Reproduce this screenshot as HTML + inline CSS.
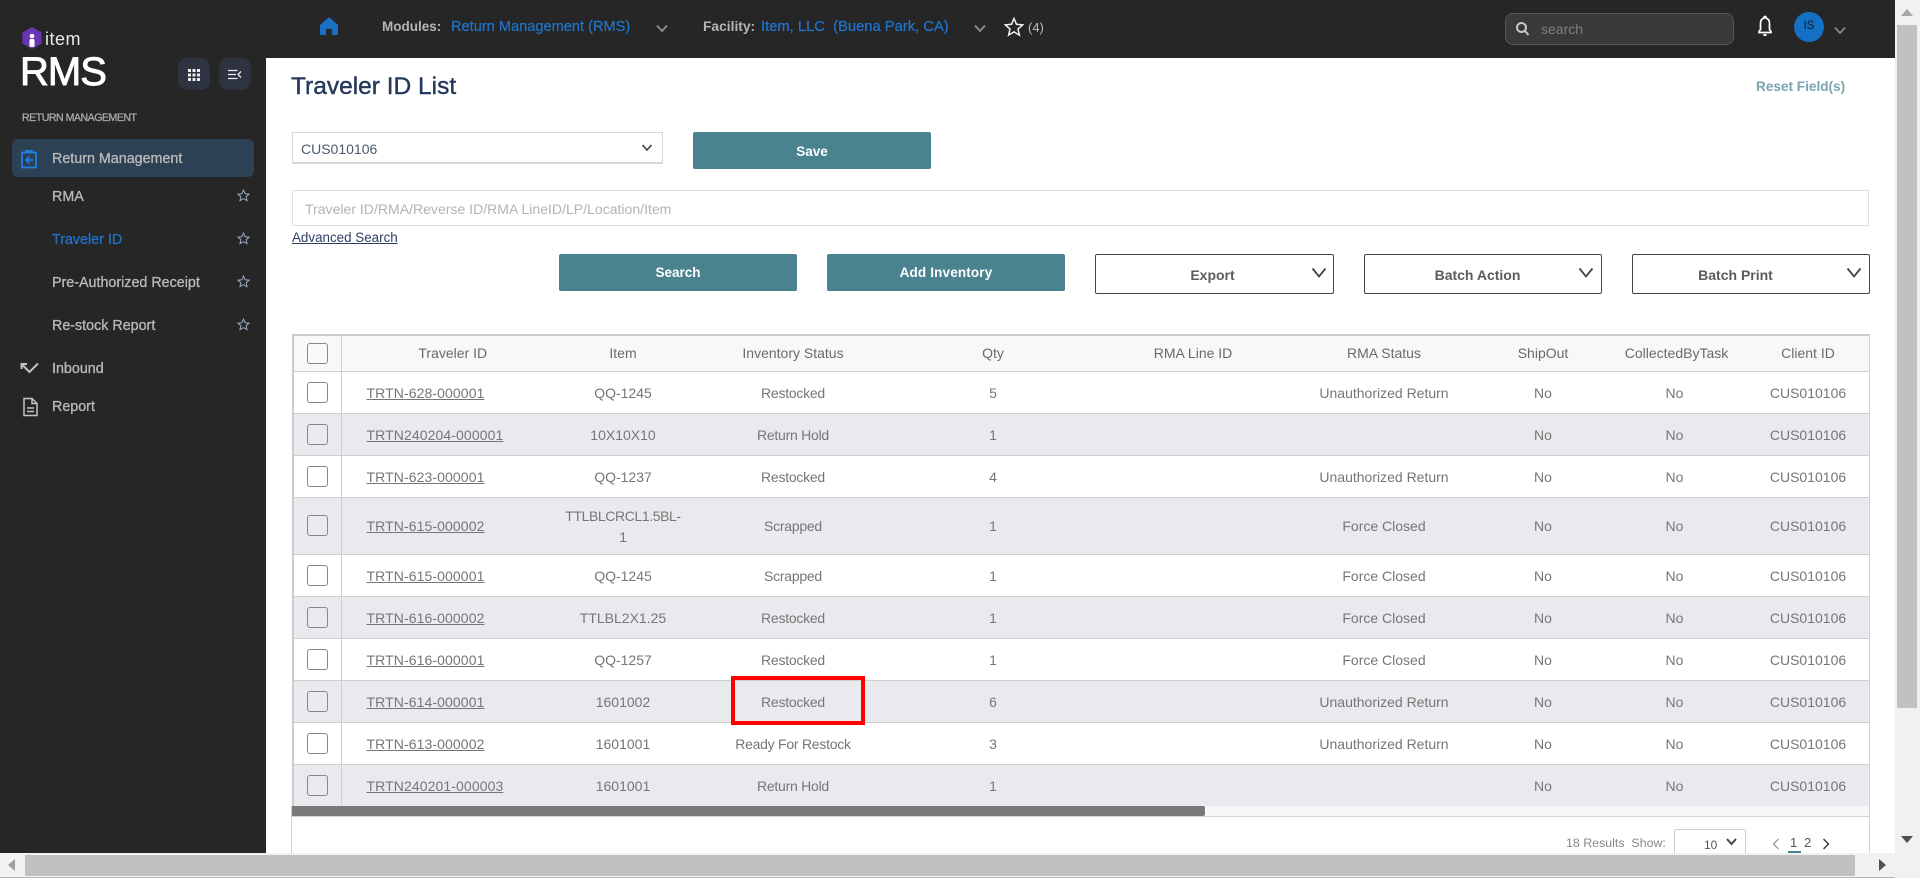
<!DOCTYPE html>
<html><head><meta charset="utf-8"><title>Traveler ID List</title>
<style>
*{box-sizing:border-box}
html,body{margin:0;padding:0;width:1920px;height:878px;overflow:hidden;background:#fff;font-family:"Liberation Sans",sans-serif}
.a{position:absolute;white-space:nowrap}
#side{position:absolute;left:0;top:0;width:266px;height:853px;background:#262626}
#top{position:absolute;left:266px;top:0;width:1630px;height:58px;background:#262626}
.nav{font-size:14.3px;color:#b9b9b9;line-height:20px;height:20px;-webkit-text-stroke:.3px}
.btn{background:#4a828f;color:#fff;font-size:13.5px;font-weight:bold;text-align:center;border-radius:2px}
.drop{border:1.5px solid #444;border-radius:2px;background:#fff;color:#5c5c5c;font-size:14px;font-weight:bold;height:40px;line-height:41px;text-align:center}
.tw{position:absolute;left:292px;top:334px;width:1577px;height:472px;overflow:hidden;border-top:2px solid #ccc;border-left:2px solid #ccc}
table{border-collapse:collapse;table-layout:fixed;width:1591px}
th,td{font-weight:normal;font-size:14px;color:#767676;text-align:center;padding:0;border-bottom:1px solid #cfcfcf;line-height:21px}
th{background:#f8f8f8;height:35px;color:#6a6a6a}
td{height:42px;padding-top:2px}
tr.g td{background:#e9eaee}
td:first-child,th:first-child{border-right:1px solid #cfcfcf;padding-top:0}
td.l{text-align:left;padding-left:25px;text-decoration:underline;letter-spacing:.1px}
td:nth-child(4){letter-spacing:-.25px}
td:nth-child(9){padding-right:4px}
.cb{display:block;width:21px;height:21px;border:1.5px solid #888;border-radius:3px;margin:0 0 0 13px;background:transparent}
.st{left:237px;width:13px;height:13px}
</style></head><body>

<div id="side"></div>
<div id="top"></div>

<!-- logo -->
<svg class="a" style="left:21px;top:26px" width="22" height="24" viewBox="0 0 22 24"><path d="M11 1l9.500 5.500v11L11 23 1.500 17.500v-11z" fill="#6a35b5"/><circle cx="11" cy="10" r="2.300" fill="#fff"/><rect x="8.500" y="13" width="5" height="8" rx="1" fill="#fff"/></svg>
<div class="a" style="left:45px;top:27px;font-size:18px;line-height:24px;letter-spacing:.5px;color:#e8e8e8">item</div>
<div class="a" style="left:20px;top:48px;font-size:40px;line-height:48px;letter-spacing:-1px;color:#fff;-webkit-text-stroke:.9px #fff">RMS</div>
<div class="a" style="left:178px;top:58px;width:32px;height:32px;background:#2e3342;border-radius:9px"></div>
<svg class="a" style="left:188px;top:69px" width="12" height="12" viewBox="0 0 12 12" fill="#eee"><rect x="0" y="0" width="3" height="3"/><rect x="4.500" y="0" width="3" height="3"/><rect x="9" y="0" width="3" height="3"/><rect x="0" y="4.500" width="3" height="3"/><rect x="4.500" y="4.500" width="3" height="3"/><rect x="9" y="4.500" width="3" height="3"/><rect x="0" y="9" width="3" height="3"/><rect x="4.500" y="9" width="3" height="3"/><rect x="9" y="9" width="3" height="3"/></svg>
<div class="a" style="left:219px;top:58px;width:32px;height:32px;background:#2e3342;border-radius:9px"></div>
<svg class="a" style="left:228px;top:69px" width="14" height="11" viewBox="0 0 14 11" fill="none" stroke="#eee" stroke-width="1.300"><path d="M0 1.500h9.500M0 5.500h8M0 9.500h9.500M13 2.500L10 5.500l3 3"/></svg>
<div class="a" style="left:22px;top:111px;font-size:10.6px;line-height:14px;color:#a8a8a8;letter-spacing:-.5px;-webkit-text-stroke:.3px">RETURN MANAGEMENT</div>

<!-- active -->
<div class="a" style="left:12px;top:139px;width:242px;height:38px;background:#2c4154;border-radius:6px"></div>
<svg class="a" style="left:20px;top:149px" width="18" height="20" viewBox="0 0 18 20" fill="none" stroke="#1e7fe8" stroke-width="1.700"><path d="M6 3.500H2v15h14v-15h-4M6 3.500V2h6v1.500z"/><path d="M13 11H6.500M9 8l-3 3 3 3" stroke-width="1.700"/></svg>
<div class="a nav" style="left:52px;top:149px">Return Management</div>
<div class="a nav" style="left:52px;top:187px">RMA</div>
<div class="a nav" style="left:52px;top:230px;color:#1f72c9">Traveler ID</div>
<div class="a nav" style="left:52px;top:273px">Pre-Authorized Receipt</div>
<div class="a nav" style="left:52px;top:316px">Re-stock Report</div>
<div class="a nav" style="left:52px;top:359px">Inbound</div>
<div class="a nav" style="left:52px;top:397px">Report</div>
<svg class="a st" style="top:189px" viewBox="0 0 15 15"><path d="M7.500 1.200l1.900 4.300 4.600.4-3.500 3 1.100 4.600-4.100-2.400-4.100 2.400 1.100-4.600-3.500-3 4.600-.4z" fill="none" stroke="#9fb0c4" stroke-width="1.100"/></svg>
<svg class="a st" style="top:232px" viewBox="0 0 15 15"><path d="M7.500 1.200l1.900 4.300 4.600.4-3.500 3 1.100 4.600-4.100-2.400-4.100 2.400 1.100-4.600-3.500-3 4.600-.4z" fill="none" stroke="#9fb0c4" stroke-width="1.100"/></svg>
<svg class="a st" style="top:275px" viewBox="0 0 15 15"><path d="M7.500 1.200l1.900 4.300 4.600.4-3.500 3 1.100 4.600-4.100-2.400-4.100 2.400 1.100-4.600-3.500-3 4.600-.4z" fill="none" stroke="#9fb0c4" stroke-width="1.100"/></svg>
<svg class="a st" style="top:318px" viewBox="0 0 15 15"><path d="M7.500 1.200l1.900 4.300 4.600.4-3.500 3 1.100 4.600-4.100-2.400-4.100 2.400 1.100-4.600-3.500-3 4.600-.4z" fill="none" stroke="#9fb0c4" stroke-width="1.100"/></svg>
<svg class="a" style="left:20px;top:361px" width="20" height="14" viewBox="0 0 20 14" fill="none" stroke="#c2c2c2" stroke-width="2"><path d="M1.500 8V3H7M2 3.500l7.500 7.500 8.500-8.500"/></svg>
<svg class="a" style="left:22px;top:397px" width="17" height="20" viewBox="0 0 17 20" fill="none" stroke="#c4c4c4" stroke-width="1.500"><path d="M2 1.500h8l5 5v12H2zM10 1.500v5h5M5 11h7M5 14.500h7"/></svg>

<!-- top bar -->
<svg class="a" style="left:320px;top:17px" width="18" height="18" viewBox="0 0 18 18"><path d="M9 0L0 8v10h6v-6h6v6h6V8z" fill="#1a6fc2"/></svg>
<div class="a" style="left:382px;top:17px;font-size:13.500px;line-height:20px;color:#b5b5b5;font-weight:bold">Modules:</div>
<div class="a" style="left:451px;top:17px;font-size:14.600px;line-height:20px;color:#1f72c9;-webkit-text-stroke:.25px">Return Management (RMS)</div>
<svg class="a" style="left:656px;top:24px" width="12" height="9" viewBox="0 0 12 9" fill="none" stroke="#8a8a8a" stroke-width="2"><path d="M1 1.500l5 5.500 5-5.500"/></svg>
<div class="a" style="left:703px;top:17px;font-size:13.800px;line-height:20px;color:#b5b5b5;font-weight:bold">Facility:</div>
<div class="a" style="left:761px;top:17px;font-size:14.750px;line-height:20px;color:#1f72c9;-webkit-text-stroke:.25px">Item, LLC &nbsp;(Buena Park, CA)</div>
<svg class="a" style="left:974px;top:24px" width="12" height="9" viewBox="0 0 12 9" fill="none" stroke="#8a8a8a" stroke-width="2"><path d="M1 1.500l5 5.500 5-5.500"/></svg>
<svg class="a" style="left:1004px;top:17px" width="20" height="20" viewBox="0 0 20 20"><path d="M10 1.500l2.500 5.800 6.200.6-4.700 4.100 1.400 6.100-5.400-3.200-5.400 3.200 1.400-6.100L1.300 7.900l6.200-.6z" fill="none" stroke="#f2f2f2" stroke-width="1.500"/></svg>
<div class="a" style="left:1028px;top:18px;font-size:13px;line-height:20px;color:#bbb">(4)</div>
<div class="a" style="left:1505px;top:13px;width:229px;height:32px;background:#3a3a3a;border:1px solid #565656;border-radius:8px"></div>
<svg class="a" style="left:1515px;top:21px" width="15" height="16" viewBox="0 0 15 16" fill="none" stroke="#c8c8c8" stroke-width="2"><circle cx="6.500" cy="6.500" r="4.500"/><path d="M10 10l3.500 4"/></svg>
<div class="a" style="left:1541px;top:19px;font-size:14px;line-height:20px;color:#7f7f7f">search</div>
<svg class="a" style="left:1756px;top:15px" width="18" height="22" viewBox="0 0 18 22"><path d="M9 1.500c-.6 0-1 .4-1 1v.6C5.500 3.800 4.500 6 4.500 8.500v6L3 16.500v1h12v-1l-1.500-2v-6c0-2.500-1-4.700-3.500-5.400v-.6c0-.6-.4-1-1-1z" fill="none" stroke="#fff" stroke-width="1.700"/><rect x="7.500" y="19" width="3" height="2" fill="#fff"/></svg>
<div class="a" style="left:1794px;top:12px;width:30px;height:30px;border-radius:50%;background:#1470c4;color:#0c1d30;font-size:11.500px;line-height:28px;text-align:center">IS</div>
<svg class="a" style="left:1834px;top:26px" width="12" height="9" viewBox="0 0 12 9" fill="none" stroke="#8a8a8a" stroke-width="1.700"><path d="M1 1.500l5 5.500 5-5.500"/></svg>

<!-- header area -->
<div class="a" style="left:291px;top:70px;font-size:24.500px;line-height:34px;color:#25395c;-webkit-text-stroke:.4px #25395c">Traveler ID List</div>
<div class="a" style="left:1756px;top:77px;font-size:13.600px;line-height:20px;color:#7aa5ae;font-weight:bold">Reset Field(s)</div>

<div class="a" style="left:292px;top:132px;width:371px;height:32px;border:1.500px solid #d8d8d8;border-bottom-width:2px;color:#4c5a6a;font-size:14px;line-height:32px;padding-left:8px">CUS010106</div>
<svg class="a" style="left:641px;top:144px" width="12" height="8" viewBox="0 0 12 8" fill="none" stroke="#3a3a3a" stroke-width="1.500"><path d="M1.500 1l4.500 5 4.500-5"/></svg>
<div class="a btn" style="left:693px;top:132px;width:238px;height:37px;line-height:40px">Save</div>

<div class="a" style="left:292px;top:190px;width:1577px;height:36px;border:1.500px solid #dfdfdf;border-radius:2px;color:#b3b3b3;font-size:14.050px;line-height:36px;padding-left:12px">Traveler ID/RMA/Reverse ID/RMA LineID/LP/Location/Item</div>
<div class="a" style="left:292px;top:228px;font-size:13.400px;line-height:20px;color:#2f4066;text-decoration:underline">Advanced Search</div>

<div class="a btn" style="left:559px;top:254px;width:238px;height:37px;line-height:38px">Search</div>
<div class="a btn" style="left:827px;top:254px;width:238px;height:37px;line-height:38px;letter-spacing:.15px">Add Inventory</div>
<div class="a drop" style="left:1095px;top:254px;width:239px;padding-right:4px">Export</div>
<div class="a drop" style="left:1364px;top:254px;width:238px;padding-right:11px">Batch Action</div>
<div class="a drop" style="left:1632px;top:254px;width:238px;padding-right:31px">Batch Print</div>
<svg class="a" style="left:1311px;top:267px" width="16" height="11" viewBox="0 0 16 11" fill="none" stroke="#444" stroke-width="1.800"><path d="M1.500 1.500l6.500 8 6.500-8"/></svg>
<svg class="a" style="left:1578px;top:267px" width="16" height="11" viewBox="0 0 16 11" fill="none" stroke="#444" stroke-width="1.800"><path d="M1.500 1.500l6.500 8 6.500-8"/></svg>
<svg class="a" style="left:1846px;top:267px" width="16" height="11" viewBox="0 0 16 11" fill="none" stroke="#444" stroke-width="1.800"><path d="M1.500 1.500l6.500 8 6.500-8"/></svg>

<!-- table -->
<div class="tw"><table>
<colgroup><col style="width:47px"><col style="width:223px"><col style="width:118px"><col style="width:222px"><col style="width:178px"><col style="width:222px"><col style="width:160px"><col style="width:158px"><col style="width:109px"><col style="width:154px"></colgroup>
<tr><th><i class="cb"></i></th><th>Traveler ID</th><th>Item</th><th>Inventory Status</th><th>Qty</th><th>RMA Line ID</th><th>RMA Status</th><th>ShipOut</th><th>CollectedByTask</th><th>Client ID</th></tr>
<tr><td><i class="cb"></i></td><td class="l">TRTN-628-000001</td><td>QQ-1245</td><td>Restocked</td><td>5</td><td></td><td>Unauthorized Return</td><td>No</td><td>No</td><td>CUS010106</td></tr>
<tr class="g"><td><i class="cb"></i></td><td class="l">TRTN240204-000001</td><td>10X10X10</td><td>Return Hold</td><td>1</td><td></td><td></td><td>No</td><td>No</td><td>CUS010106</td></tr>
<tr><td><i class="cb"></i></td><td class="l">TRTN-623-000001</td><td>QQ-1237</td><td>Restocked</td><td>4</td><td></td><td>Unauthorized Return</td><td>No</td><td>No</td><td>CUS010106</td></tr>
<tr class="g"><td style="height:57px"><i class="cb"></i></td><td class="l">TRTN-615-000002</td><td style="letter-spacing:-.4px">TTLBLCRCL1.5BL-<br>1</td><td>Scrapped</td><td>1</td><td></td><td>Force Closed</td><td>No</td><td>No</td><td>CUS010106</td></tr>
<tr><td><i class="cb"></i></td><td class="l">TRTN-615-000001</td><td>QQ-1245</td><td>Scrapped</td><td>1</td><td></td><td>Force Closed</td><td>No</td><td>No</td><td>CUS010106</td></tr>
<tr class="g"><td><i class="cb"></i></td><td class="l">TRTN-616-000002</td><td>TTLBL2X1.25</td><td>Restocked</td><td>1</td><td></td><td>Force Closed</td><td>No</td><td>No</td><td>CUS010106</td></tr>
<tr><td><i class="cb"></i></td><td class="l">TRTN-616-000001</td><td>QQ-1257</td><td>Restocked</td><td>1</td><td></td><td>Force Closed</td><td>No</td><td>No</td><td>CUS010106</td></tr>
<tr class="g"><td><i class="cb"></i></td><td class="l">TRTN-614-000001</td><td>1601002</td><td>Restocked</td><td>6</td><td></td><td>Unauthorized Return</td><td>No</td><td>No</td><td>CUS010106</td></tr>
<tr><td><i class="cb"></i></td><td class="l">TRTN-613-000002</td><td>1601001</td><td>Ready For Restock</td><td>3</td><td></td><td>Unauthorized Return</td><td>No</td><td>No</td><td>CUS010106</td></tr>
<tr class="g"><td><i class="cb"></i></td><td class="l">TRTN240201-000003</td><td>1601001</td><td>Return Hold</td><td>1</td><td></td><td></td><td>No</td><td>No</td><td>CUS010106</td></tr>
</table></div>

<!-- table bottom -->
<div class="a" style="left:292px;top:806px;width:1577px;height:11px;background:#f7f7f7;border-bottom:1px solid #d2d2d2"></div>
<div class="a" style="left:291px;top:806px;width:914px;height:10px;background:#78797b;border-radius:2px"></div>
<div class="a" style="left:291px;top:806px;width:1px;height:47px;background:#d2d2d2"></div>
<div class="a" style="left:1869px;top:334px;width:1px;height:519px;background:#d2d2d2"></div>
<div class="a" style="left:1566px;top:833px;font-size:12.400px;line-height:20px;color:#888">18 Results &nbsp;Show:</div>
<div class="a" style="left:1674px;top:829px;width:72px;height:26px;border:1px solid #ccc;border-radius:2px;background:#fff"></div>
<div class="a" style="left:1704px;top:835px;font-size:12px;line-height:20px;color:#555">10</div>
<svg class="a" style="left:1726px;top:838px" width="11" height="8" viewBox="0 0 11 8" fill="none" stroke="#444" stroke-width="2"><path d="M1 1l4.500 5L10 1"/></svg>
<svg class="a" style="left:1772px;top:838px" width="8" height="12" viewBox="0 0 8 12" fill="none" stroke="#999" stroke-width="1.300"><path d="M6.500 1L1.500 6l5 5"/></svg>
<div class="a" style="left:1790px;top:833px;font-size:13px;line-height:20px;color:#555">1</div>
<div class="a" style="left:1804px;top:833px;font-size:13px;line-height:20px;color:#555">2</div>
<div class="a" style="left:1788px;top:851px;width:13px;height:2px;background:#4a828f"></div>
<svg class="a" style="left:1822px;top:838px" width="8" height="12" viewBox="0 0 8 12" fill="none" stroke="#444" stroke-width="1.500"><path d="M1.500 1l5 5-5 5"/></svg>

<!-- red highlight -->
<div class="a" style="left:731px;top:676px;width:134px;height:49px;border:4px solid #f00"></div>

<!-- scrollbars -->
<div class="a" style="left:1895px;top:0;width:25px;height:853px;background:#f1f1f1"></div>
<div class="a" style="left:1897px;top:25px;width:20px;height:683px;background:#c1c1c1"></div>
<svg class="a" style="left:1901px;top:9px" width="12" height="8"><path d="M6 0l6 7H0z" fill="#a8a8a8"/></svg>
<svg class="a" style="left:1901px;top:836px" width="12" height="8"><path d="M0 0h12L6 7z" fill="#505050"/></svg>
<div class="a" style="left:0;top:853px;width:1920px;height:25px;background:#f1f1f1"></div>
<div class="a" style="left:25px;top:855px;width:1830px;height:21px;background:#c1c1c1"></div>
<div class="a" style="left:0;top:877px;width:1895px;height:1px;background:#bdb2ad"></div>
<svg class="a" style="left:8px;top:859px" width="8" height="12"><path d="M7 0v12L0 6z" fill="#a0a0a0"/></svg>
<svg class="a" style="left:1879px;top:859px" width="8" height="12"><path d="M0 0v12l7-6z" fill="#505050"/></svg>
</body></html>
